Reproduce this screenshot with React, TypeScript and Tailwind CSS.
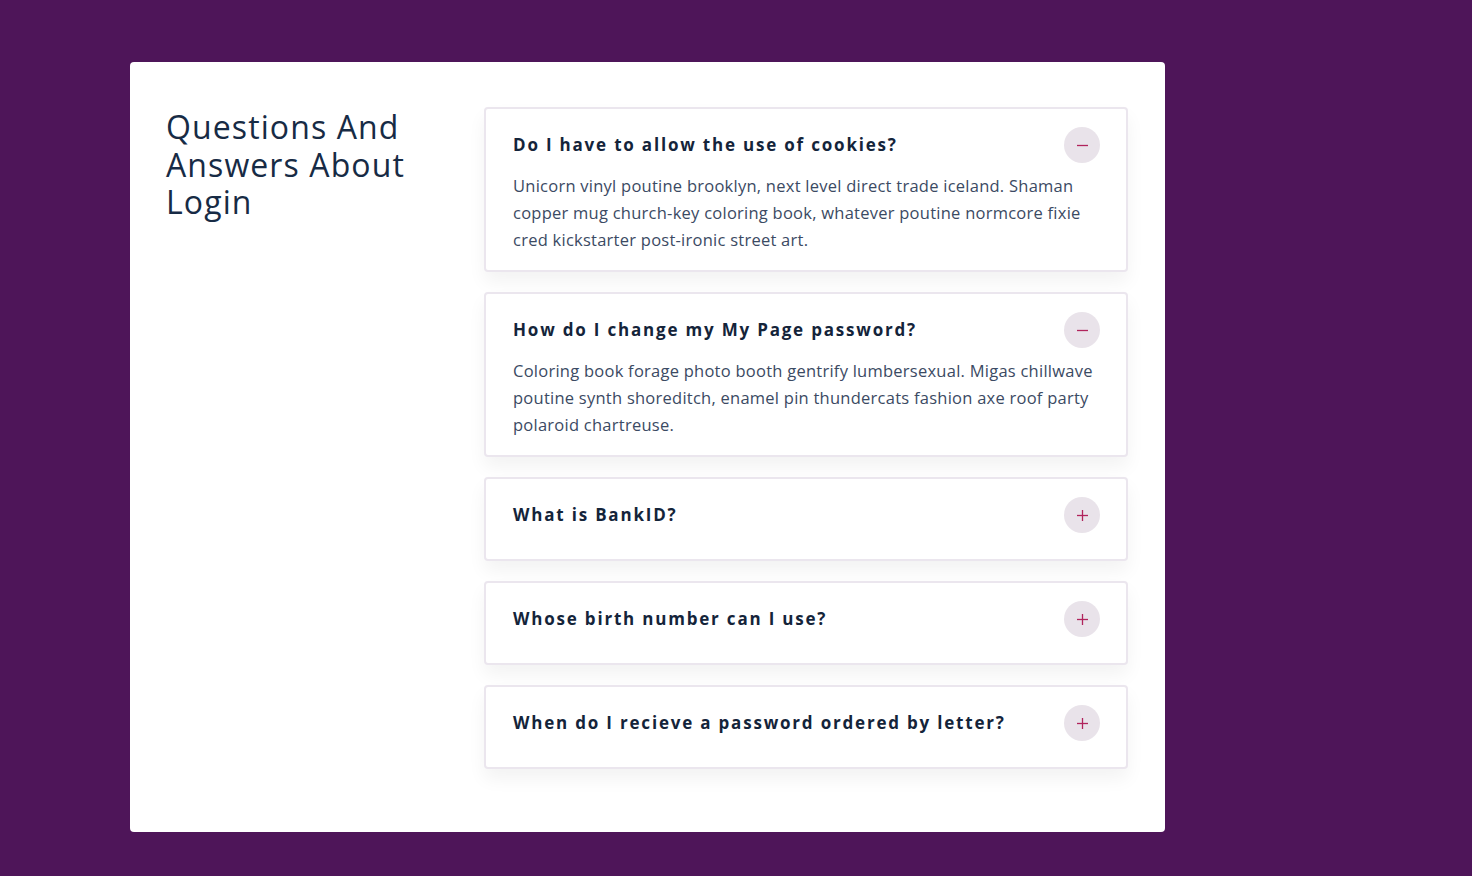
import { useState } from "react";

const faqs = [
  {
    q: "Do I have to allow the use of cookies?",
    a: "Unicorn vinyl poutine brooklyn, next level direct trade iceland. Shaman copper mug church-key coloring book, whatever poutine normcore fixie cred kickstarter post-ironic street art.",
  },
  {
    q: "How do I change my My Page password?",
    a: "Coloring book forage photo booth gentrify lumbersexual. Migas chillwave poutine synth shoreditch, enamel pin thundercats fashion axe roof party polaroid chartreuse.",
  },
  { q: "What is BankID?", a: "Hashtag typewriter kinfolk, tofu pickled heirloom listicle." },
  { q: "Whose birth number can I use?", a: "Beard affogato sartorial, raclette flexitarian tote bag." },
  { q: "When do I recieve a password ordered by letter?", a: "Pour-over yuccie bitters, vape semiotics vinyl wolf." },
];

function ToggleIcon({ open }: { open: boolean }) {
  return (
    <span className="flex h-9 w-9 shrink-0 items-center justify-center rounded-full bg-[#e9e3ea]">
      <svg width="13" height="13" viewBox="0 0 13 13" fill="none" stroke="#b1245c" strokeWidth="1.3">
        <path d="M1 6.5h11" />
        {!open && <path d="M6.5 1v11" />}
      </svg>
    </span>
  );
}

export default function App() {
  const [open, setOpen] = useState<number[]>([0, 1]);

  const toggle = (i: number) =>
    setOpen((prev) => (prev.includes(i) ? prev.filter((x) => x !== i) : [...prev, i]));

  return (
    <div className="min-h-screen bg-[#4e1559] pl-[130px] pt-[62px] font-['Open_Sans','Liberation_Sans',sans-serif]">
      <div className="flex h-[770px] w-[1035px] items-start rounded bg-white pl-[36px] pt-[45px]">
        {/* Left title */}
        <h1 className="mt-px w-[318px] shrink-0 pr-[30px] text-[32px] font-normal leading-[37.5px] tracking-[1.1px] text-[#172b45]">
          Questions And Answers About Login
        </h1>

        {/* Accordion */}
        <div className="flex w-[644px] flex-col gap-5">
          {faqs.map((f, i) => {
            const isOpen = open.includes(i);
            return (
              <div
                key={i}
                className={`rounded border-2 border-[#ebe6ee] bg-white pl-[27px] pr-[26px] pt-[18px] shadow-[0_10px_18px_rgba(0,0,0,0.05)] ${
                  isOpen ? "pb-[17px]" : "pb-[26px]"
                }`}
              >
                <button
                  onClick={() => toggle(i)}
                  className="flex w-full items-center justify-between text-left"
                >
                  <span className="text-[17px] font-bold tracking-[1.8px] text-[#14243a]">{f.q}</span>
                  <ToggleIcon open={isOpen} />
                </button>
                {isOpen && (
                  <p className="mt-[9px] pr-[2px] text-[16.5px] font-normal leading-[27px] tracking-[0.25px] text-[#3b4a63]">
                    {f.a}
                  </p>
                )}
              </div>
            );
          })}
        </div>
      </div>
    </div>
  );
}
